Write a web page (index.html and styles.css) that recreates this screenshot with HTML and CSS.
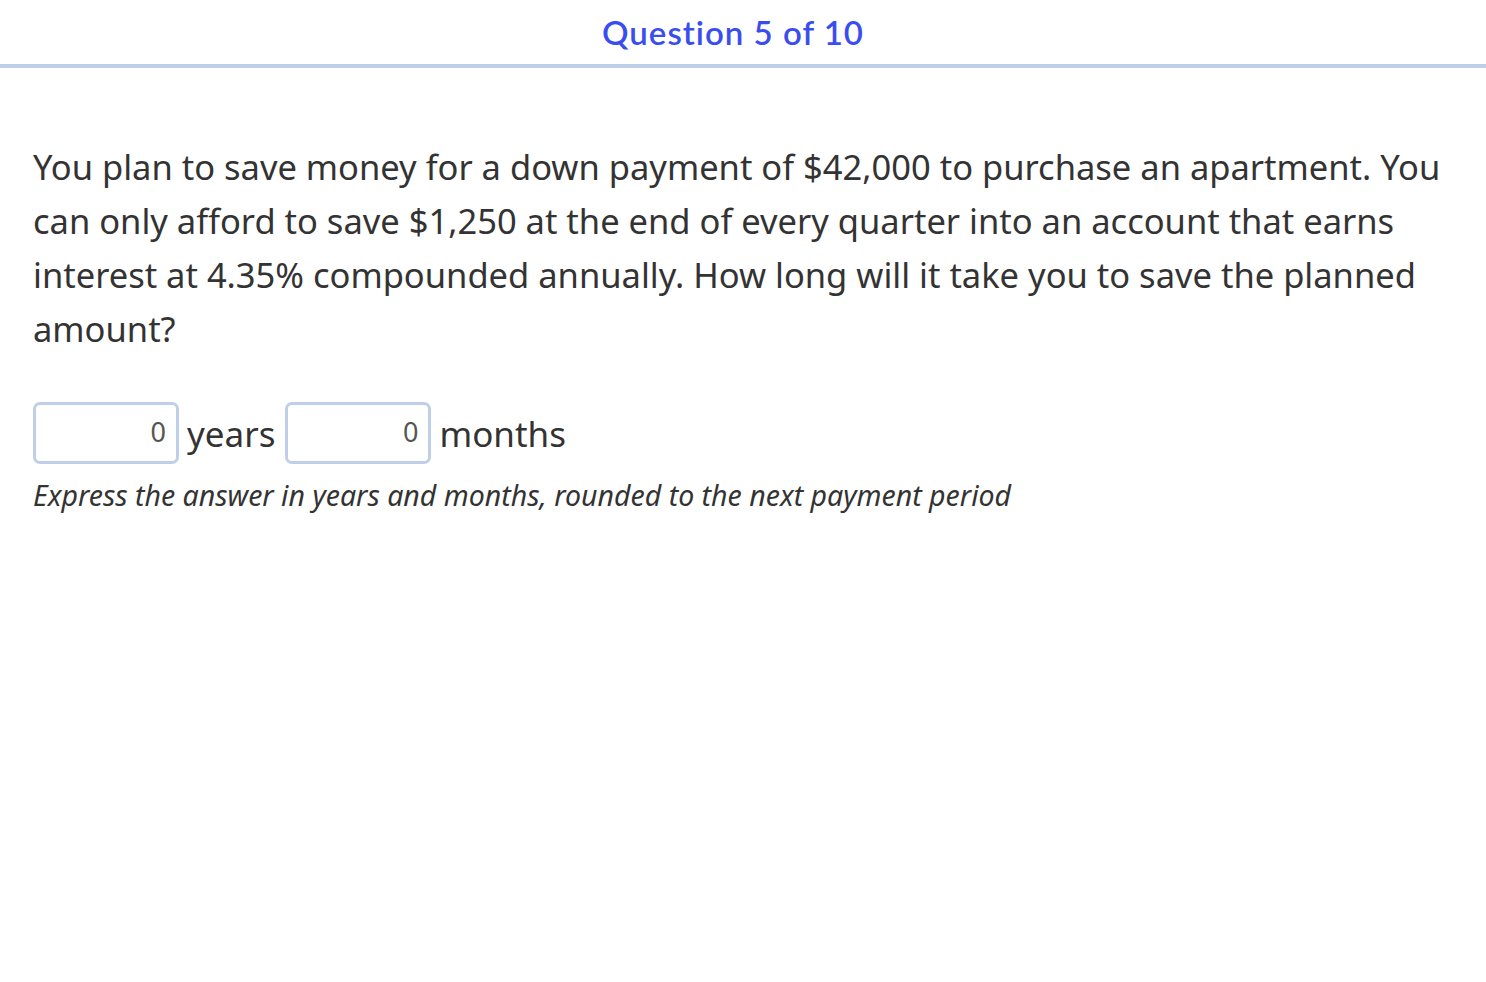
FILE: index.html
```html
<!DOCTYPE html>
<html lang="en">
<head>
    <meta charset="UTF-8">
    <meta name="viewport" content="width=device-width, initial-scale=1.0">
    <title>Question 5 of 10</title>
    <link rel="stylesheet" href="styles.css">
</head>
<body>

    <div class="cabecera">
        <div class="titulo">Question 5 of 10</div>
    </div>

    <div class="pregunta">
        <p class="enunciado">You plan to save money for a down payment of $42,000 to purchase an apartment. You can only afford to save $1,250 at the end of every quarter into an account that earns interest at 4.35% compounded annually. How long will it take you to save the planned amount?</p>

        <div class="respuesta">
            <input type="text" class="campo" value="0">
            <span class="unidad">years</span>
            <input type="text" class="campo" value="0">
            <span class="unidad">months</span>
        </div>

        <div class="ayuda">Express the answer in years and months, rounded to the next payment period</div>
    </div>

</body>
</html>
```

FILE: styles.css
```css
body {
    font-family: "Noto Sans", "Open Sans", sans-serif;
    background-color: #ffffff;
    color: #333333;
    margin: 0;
}

.cabecera {
    height: 64px;
    border-bottom: 4px solid #c0cfe8; /* Línea azul clara */
    display: flex;
    justify-content: center;
}

.titulo {
    font-family: Lato, sans-serif;
    font-weight: 600;
    font-size: 33px;
    letter-spacing: 1px;
    font-variant-ligatures: none;
    color: #3a4ef0;
    padding-top: 12px;
    margin-left: -20px;
}

.pregunta {
    padding: 0 33px;
}

.enunciado {
    font-size: 34.5px;
    line-height: 54px;
    margin: 72px 0 0 0;
}

.respuesta {
    display: flex;
    align-items: center;
    margin-top: 46px;
    gap: 8px;
}

.campo {
    width: 146px;
    height: 62px;
    box-sizing: border-box;
    border: 3px solid #c0cfe8;
    border-radius: 7px;
    padding: 0 10px 3px 10px;
    text-align: right;
    font-family: "Noto Sans", sans-serif;
    font-size: 27px;
    color: #555555;
    outline: none;
}

.unidad {
    font-size: 35px;
    margin-right: 2px;
}

.ayuda {
    font-style: italic;
    font-size: 28.5px;
    margin-top: 12px;
}
```
